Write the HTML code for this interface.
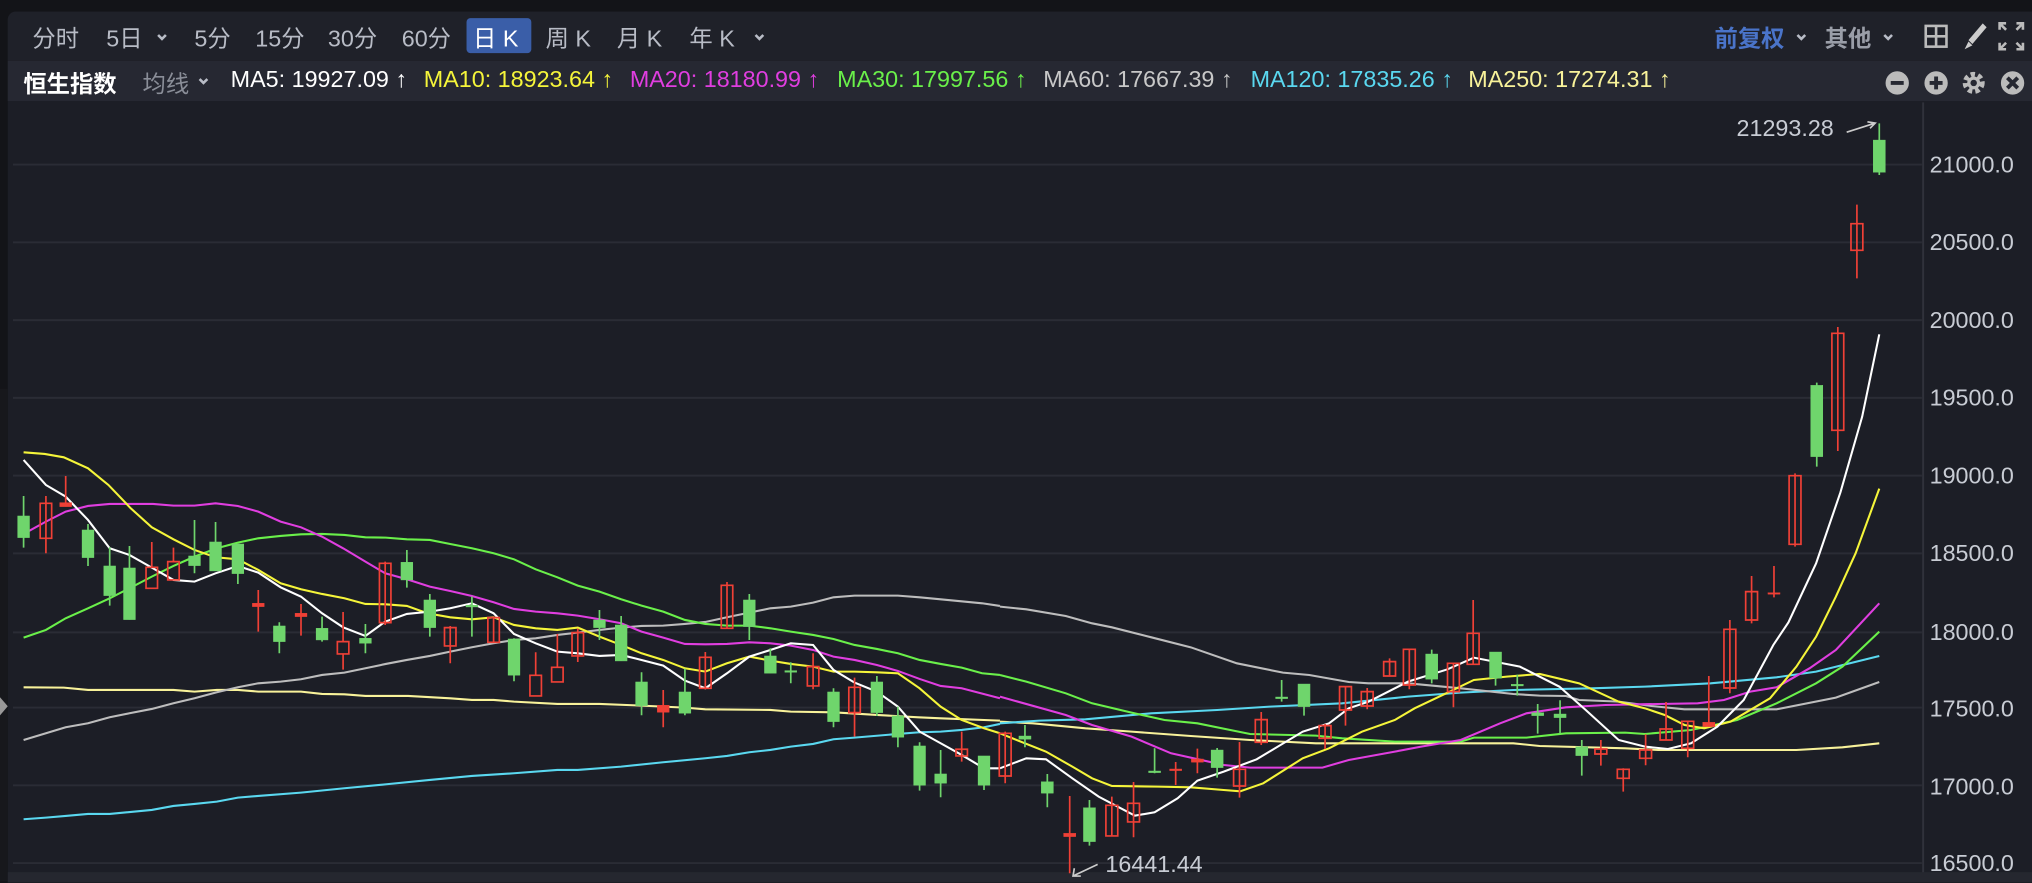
<!DOCTYPE html>
<html><head><meta charset="utf-8"><style>
html,body{margin:0;padding:0;background:#131418;width:2032px;height:882px;overflow:hidden}
#w{position:absolute;left:0;top:0;width:1568px;height:681px;transform:scale(1.29592);transform-origin:0 0;font-family:"Liberation Sans","Noto Sans CJK SC",sans-serif}
.t{position:absolute;white-space:nowrap}
</style></head><body><div id="w">
<div style="position:absolute;left:6px;top:9px;width:1562px;height:672px;background:#1c1e26;border-radius:6px 0 0 0"></div>
<div style="position:absolute;left:6px;top:9px;width:1562px;height:38px;background:#1f2129;border-radius:6px 0 0 0"></div>
<div style="position:absolute;left:6px;top:47px;width:1562px;height:31px;background:#262832"></div>
<div style="position:absolute;left:0;top:300px;width:6px;height:380px;background:#17181c"></div>
<svg style="position:absolute;left:0;top:536px" width="8" height="18"><path d="M0 2 L6 9 L0 16Z" fill="#999"/></svg>
<div style="position:absolute;left:360px;top:14px;width:50px;height:27px;background:#3a5ea8;border-radius:3px"></div>
<div class="t" style="left:25px;top:16px;font-size:18px;color:#b8bcc6">分时</div>
<div class="t" style="left:82px;top:16px;font-size:18px;color:#b8bcc6">5日</div>
<div class="t" style="left:150px;top:16px;font-size:18px;color:#b8bcc6">5分</div>
<div class="t" style="left:197px;top:16px;font-size:18px;color:#b8bcc6">15分</div>
<div class="t" style="left:253px;top:16px;font-size:18px;color:#b8bcc6">30分</div>
<div class="t" style="left:310px;top:16px;font-size:18px;color:#b8bcc6">60分</div>
<div class="t" style="left:365px;top:16px;font-size:18px;color:#fff">日 K</div>
<div class="t" style="left:421px;top:16px;font-size:18px;color:#b8bcc6">周 K</div>
<div class="t" style="left:476px;top:16px;font-size:18px;color:#b8bcc6">月 K</div>
<div class="t" style="left:532px;top:16px;font-size:18px;color:#b8bcc6">年 K</div>
<div class="t" style="left:1323px;top:16px;font-size:18px;color:#4a74c9;font-weight:bold">前复权</div>
<div class="t" style="left:1408px;top:16px;font-size:18px;color:#9a9ea8;font-weight:bold">其他</div>
<svg style="position:absolute;left:0;top:0" width="1568" height="681">
<g fill="none" stroke="#b8bcc6" stroke-width="2"><path d="M122 27l3 3 3-3M583 27l3 3 3-3M154 61l3 3 3-3"/><path d="M1387 27l3 3 3-3M1454 27l3 3 3-3"/></g>
<rect x="1486" y="20" width="16" height="16" fill="none" stroke="#bbb" stroke-width="2"/><path d="M1494 20v16M1486 28h16" stroke="#bbb" stroke-width="2"/>
<path d="M1530 18 L1519 31 L1522 34 L1533 21Z M1519 32 L1516 38 L1522 35Z" fill="#ccc"/>
<g stroke="#bbb" stroke-width="2" fill="none"><path d="M1543 23v-5h5M1543 18l5 5M1561 23v-5h-5M1561 18l-5 5M1543 33v5h5M1543 38l5-5M1561 33v5h-5M1561 38l-5-5"/></g>
<g fill="#bbb"><circle cx="1464" cy="64" r="9"/><circle cx="1494" cy="64" r="9"/><circle cx="1553" cy="64" r="9"/></g>
<path d="M1459 64h10M1489 64h10M1494 59v10M1549 60l8 8M1557 60l-8 8" stroke="#262832" stroke-width="3"/>
<circle cx="1523" cy="64" r="6" fill="none" stroke="#bbb" stroke-width="5" stroke-dasharray="3 2.2"/><circle cx="1523" cy="64" r="5" fill="#bbb"/><circle cx="1523" cy="64" r="2.5" fill="#262832"/>
<g stroke="#2a2c35" stroke-width="1.5"><path d="M10 127H1483M10 187H1483M10 247H1483M10 307H1483M10 367H1483M10 427H1483M10 488H1483M10 546H1483M10 606H1483M10 666H1483"/></g>
<path d="M1484 79V681" stroke="#30323b" stroke-width="1.5"/>
<rect x="6" y="673" width="1562" height="8" fill="#25272f"/>
<g font-size="18" fill="#c8ccd4" font-family="Liberation Sans,sans-serif">
<text x="1489" y="133">21000.0</text><text x="1489" y="193">20500.0</text><text x="1489" y="253">20000.0</text><text x="1489" y="313">19500.0</text><text x="1489" y="373">19000.0</text><text x="1489" y="433">18500.0</text><text x="1489" y="494">18000.0</text><text x="1489" y="553">17500.0</text><text x="1489" y="613">17000.0</text><text x="1489" y="672">16500.0</text>
<text x="1340" y="105">21293.28</text><text x="853" y="673">16441.44</text></g>
<path d="M1425 102 L1447 95 M1441 94 L1447 95 L1443 99" stroke="#ccc" stroke-width="1.3" fill="none"/>
<path d="M847 667 L828 676 M829 670 L828 676 L834 676" stroke="#ccc" stroke-width="1.3" fill="none"/>

<g transform="translate(0,339.5) scale(0.4921,0.2572)">
<g fill="none">
<polyline vector-effect="non-scaling-stroke" stroke="#f8f29a" stroke-width="1.6" points="37,742 100,743 138,750 272,750 305,755 340,750 373,750 405,755 472,755 505,762 540,763 573,768 640,768 706,775 740,780 774,780 806,785 874,792 940,792 1006,797 1074,803 1106,808 1208,810 1240,815 1307,817 1375,825 1440,832 1475,835 1568,842"/>
<polyline vector-effect="non-scaling-stroke" stroke="#5ad8f0" stroke-width="1.6" points="37,1138 72,1133 103,1128 138,1122 172,1122 238,1110 272,1098 305,1092 340,1085 373,1073 405,1068 472,1058 540,1045 606,1033 674,1020 740,1008 806,1000 874,990 906,990 974,980 1040,967 1106,955 1140,948 1175,937 1208,930 1240,920 1275,912 1307,898 1340,893 1408,882 1442,877 1475,875 1508,870 1543,862 1568,852"/>
<polyline vector-effect="non-scaling-stroke" stroke="#bdbdbd" stroke-width="1.6" points="37,900 72,880 103,862 138,850 172,832 203,820 238,807 272,790 305,775 340,757 373,742 405,730 440,725 472,718 505,705 540,698 573,685 605,672 638,660 674,648 706,635 740,622 774,610 806,600 840,595 874,585 906,578 940,570 974,563 1006,558 1040,557 1074,552 1106,546 1140,532 1175,518 1208,505 1240,500 1275,488 1307,472 1340,467 1408,467 1442,472 1475,478 1540,490 1568,498"/>
<polyline vector-effect="non-scaling-stroke" stroke="#6af04a" stroke-width="1.6" points="37,593 72,570 103,535 138,505 172,475 203,445 238,410 272,378 305,350 340,325 373,308 405,295 440,288 472,283 505,282 540,285 573,292 605,293 638,298 674,300 706,312 740,325 774,340 806,358 840,388 874,412 906,437 940,455 974,478 1006,497 1040,515 1074,540 1106,552 1140,557 1175,557 1208,565 1240,575 1275,585 1307,597 1340,615 1375,627 1408,640 1442,660 1475,672 1508,683 1540,700 1568,705"/>
<polyline vector-effect="non-scaling-stroke" stroke="#e03ee0" stroke-width="1.6" points="37,282 72,245 103,215 138,198 172,192 240,192 272,197 305,197 338,190 373,198 405,215 440,245 472,262 505,290 538,325 573,365 604,400 638,418 674,440 706,453 740,468 774,487 806,507 840,515 874,520 906,527 940,538 974,550 1006,575 1040,593 1074,612 1106,613 1140,612 1175,607 1208,610 1240,617 1275,630 1307,650 1340,660 1375,675 1408,693 1442,717 1475,738 1508,745 1568,775"/>
<polyline vector-effect="non-scaling-stroke" stroke="#f5f53a" stroke-width="1.6" points="37,37 70,42 100,52 138,85 170,135 205,205 238,262 272,298 305,330 338,352 373,358 405,390 440,430 472,448 505,462 540,475 573,492 605,493 638,498 670,520 706,532 740,538 774,532 806,555 840,565 874,570 906,563 940,590 974,615 1006,640 1040,660 1074,685 1106,695 1140,670 1175,650 1208,662 1240,672 1275,680 1307,695 1340,695 1375,697 1408,700 1442,745 1475,800 1508,840 1543,865 1568,880"/>
<polyline vector-effect="non-scaling-stroke" stroke="#ffffff" stroke-width="1.6" points="37,60 72,135 103,170 138,240 172,325 203,345 238,383 272,420 305,425 338,400 373,378 405,398 440,442 472,470 505,520 538,562 573,588 604,545 638,522 674,515 706,505 740,490 774,520 806,582 840,610 874,635 906,640 940,648 974,645 1006,660 1040,677 1074,722 1106,745 1140,700 1175,650 1208,630 1240,610 1275,615 1307,690 1340,728 1375,755 1408,800 1442,875 1475,910 1508,945 1543,985 1568,985"/>
</g>
<g stroke-width="1.3">
<g stroke="#6fd56c" fill="#6fd56c">
<path vector-effect="non-scaling-stroke" d="M37 168V323M138 252V378M172 322V497M203 318V539M305 240V400M338 246V393M373 312V432M438 547V640M505 530V605M573 552V640M638 330V443M674 462V590M740 470V590M806 595V724M940 510V600M974 528V663M1006 697V826M1074 686V826M1175 462V600M1208 625V700M1240 667V730M1307 745V862M1375 708V828M1408 800V922M1442 907V1052M1475 930V1072M1543 948V1050"/>
<rect x="28" y="228" width="18" height="65"/><rect x="129" y="270" width="18" height="83"/><rect x="163" y="378" width="18" height="89"/><rect x="194" y="384" width="18" height="155"/><rect x="296" y="348" width="18" height="29"/><rect x="329" y="306" width="18" height="87"/><rect x="364" y="312" width="18" height="89"/><rect x="429" y="558" width="18" height="47"/><rect x="496" y="565" width="18" height="35"/><rect x="564" y="595" width="18" height="15"/><rect x="629" y="367" width="18" height="53"/><rect x="665" y="480" width="18" height="83"/><rect x="731" y="496" width="18" height="5"/><rect x="797" y="597" width="18" height="109"/><rect x="931" y="540" width="18" height="23"/><rect x="965" y="555" width="18" height="108"/><rect x="997" y="726" width="18" height="71"/><rect x="1065" y="756" width="18" height="64"/><rect x="1166" y="480" width="18" height="80"/><rect x="1199" y="648" width="18" height="52"/><rect x="1231" y="692" width="18" height="5"/><rect x="1298" y="756" width="18" height="89"/><rect x="1366" y="726" width="18" height="92"/><rect x="1399" y="828" width="18" height="64"/><rect x="1433" y="918" width="18" height="118"/><rect x="1466" y="1002" width="18" height="28"/><rect x="1534" y="948" width="18" height="88"/>
</g>
<g stroke="#ef4036" fill="none">
<path vector-effect="non-scaling-stroke" d="M72 168V295M72 190V340M103 108V200M238 306V382M272 323V365M405 450V575M472 492V587M538 516V605M538 642V689M604 365V555M706 558V670M774 530V607M840 637V706M874 582V682M906 566V666M1040 750V862M1106 636V748M1140 426V565M1275 640V748M1340 713V890M1508 875V965"/>
<rect vector-effect="non-scaling-stroke" x="63" y="190" width="18" height="105"/><rect vector-effect="non-scaling-stroke" x="229" y="382" width="18" height="63"/><rect vector-effect="non-scaling-stroke" x="263" y="365" width="18" height="55"/><rect vector-effect="non-scaling-stroke" x="529" y="605" width="18" height="37"/><rect vector-effect="non-scaling-stroke" x="595" y="370" width="18" height="178"/><rect vector-effect="non-scaling-stroke" x="697" y="563" width="18" height="55"/><rect vector-effect="non-scaling-stroke" x="765" y="533" width="18" height="74"/><rect vector-effect="non-scaling-stroke" x="831" y="706" width="18" height="62"/><rect vector-effect="non-scaling-stroke" x="865" y="682" width="18" height="44"/><rect vector-effect="non-scaling-stroke" x="897" y="578" width="18" height="70"/><rect vector-effect="non-scaling-stroke" x="1097" y="652" width="18" height="93"/><rect vector-effect="non-scaling-stroke" x="1131" y="436" width="18" height="129"/><rect vector-effect="non-scaling-stroke" x="1266" y="680" width="18" height="58"/><rect vector-effect="non-scaling-stroke" x="1331" y="742" width="18" height="76"/><rect vector-effect="non-scaling-stroke" x="1499" y="928" width="18" height="20"/>
<g fill="#ef4036"><rect x="94" y="188" width="18" height="12"/><rect x="396" y="490" width="18" height="10"/><rect x="463" y="520" width="18" height="10"/><rect x="1031" y="796" width="18" height="21"/></g>
</g></g></g>

<g transform="translate(771.6,424.4) scale(0.5079,0.2572)">
<g fill="none">
<polyline vector-effect="non-scaling-stroke" stroke="#f8f29a" stroke-width="1.6" points="0,515 50,520 130,535 200,545 290,558 380,570 480,580 600,580 780,580 820,588 950,595 1000,600 1210,600 1280,592 1336,580"/>
<polyline vector-effect="non-scaling-stroke" stroke="#5ad8f0" stroke-width="1.6" points="0,520 60,512 130,508 230,490 330,480 410,470 520,460 620,440 700,428 780,420 900,415 980,410 1080,400 1180,382 1240,365 1336,318"/>
<polyline vector-effect="non-scaling-stroke" stroke="#bdbdbd" stroke-width="1.6" points="0,170 40,178 100,198 140,220 170,232 230,262 290,292 360,340 430,368 470,375 530,396 560,400 620,400 700,415 780,432 820,437 860,438 880,450 940,455 990,468 1040,478 1080,478 1180,478 1270,443 1336,396"/>
<polyline vector-effect="non-scaling-stroke" stroke="#6af04a" stroke-width="1.6" points="0,375 40,395 100,430 140,460 200,488 250,510 300,520 350,540 380,552 480,557 520,565 600,575 700,575 720,563 800,563 860,550 950,548 980,552 1050,540 1120,510 1180,460 1240,400 1280,350 1336,245"/>
<polyline vector-effect="non-scaling-stroke" stroke="#e03ee0" stroke-width="1.6" points="0,440 100,495 140,525 200,560 260,610 340,645 380,653 490,653 530,630 600,605 640,590 700,570 760,520 800,490 860,472 920,465 1000,462 1060,460 1100,450 1140,425 1180,412 1230,355 1270,300 1336,160"/>
<polyline vector-effect="non-scaling-stroke" stroke="#f5f53a" stroke-width="1.6" points="0,550 70,605 110,650 140,685 170,708 240,710 290,712 340,720 365,724 400,700 460,625 500,595 550,545 600,510 630,475 680,428 720,390 770,380 820,372 880,400 940,455 980,475 1010,495 1040,525 1070,535 1110,515 1170,445 1210,350 1240,260 1270,140 1300,10 1336,-184"/>
<polyline vector-effect="non-scaling-stroke" stroke="#ffffff" stroke-width="1.6" points="0,655 40,625 70,628 110,685 150,740 205,797 235,787 270,745 300,692 340,665 390,628 460,545 500,520 530,475 560,455 620,395 680,358 720,323 790,350 850,410 890,480 940,570 980,590 1015,597 1050,580 1090,530 1130,450 1175,285 1198,217 1240,40 1277,-173 1310,-400 1336,-647"/>
</g>
<g stroke="#6fd56c" fill="#6fd56c">
<path vector-effect="non-scaling-stroke" stroke-width="1.3" d="M38 525V592M72 672V772M136 750V887M235 595V670M330 594V683M428 390V455M462 402V497M656 299V400M753 306V407M786 374V437M817 462V551M851 451V551M884 570V677M1241 -502V-250M1336 -1280V-1125"/>
<rect x="29" y="558" width="18" height="10"/><rect x="63" y="695" width="18" height="35"/><rect x="127" y="773" width="18" height="102"/><rect x="226" y="663" width="18" height="5"/><rect x="321" y="600" width="18" height="53"/><rect x="419" y="441" width="18" height="5"/><rect x="453" y="402" width="18" height="68"/><rect x="647" y="312" width="18" height="76"/><rect x="744" y="306" width="18" height="79"/><rect x="777" y="403" width="18" height="5"/><rect x="808" y="488" width="18" height="9"/><rect x="842" y="492" width="18" height="11"/><rect x="875" y="590" width="18" height="27"/><rect x="1232" y="-494" width="18" height="214"/><rect x="1327" y="-1230" width="18" height="97"/>
</g>
<g stroke="#ef4036" fill="none">
<path vector-effect="non-scaling-stroke" stroke-width="1.3" d="M8 545V700M106 738V970M170 740V858M203 696V862M267 636V705M300 596V670M364 576V743M397 486V585M494 522V597M525 408V527M558 414V478M592 325V380M622 296V418M689 338V472M719 150V345M913 570V647M947 655V725M981 553V646M1012 456V570M1045 512V622M1077 378V530M1109 210V430M1142 78V220M1176 48V142M1208 -230V-10M1273 -669V-297M1302 -1036V-815"/>
<g stroke-width="1.3">
<rect vector-effect="non-scaling-stroke" x="-1" y="550" width="18" height="128"/><rect vector-effect="non-scaling-stroke" x="161" y="766" width="18" height="92"/><rect vector-effect="non-scaling-stroke" x="194" y="760" width="18" height="56"/><rect vector-effect="non-scaling-stroke" x="355" y="658" width="18" height="50"/><rect vector-effect="non-scaling-stroke" x="388" y="509" width="18" height="68"/><rect vector-effect="non-scaling-stroke" x="485" y="527" width="18" height="38"/><rect vector-effect="non-scaling-stroke" x="516" y="410" width="18" height="70"/><rect vector-effect="non-scaling-stroke" x="549" y="425" width="18" height="43"/><rect vector-effect="non-scaling-stroke" x="583" y="335" width="18" height="43"/><rect vector-effect="non-scaling-stroke" x="613" y="298" width="18" height="107"/><rect vector-effect="non-scaling-stroke" x="680" y="340" width="18" height="85"/><rect vector-effect="non-scaling-stroke" x="710" y="250" width="18" height="93"/><rect vector-effect="non-scaling-stroke" x="904" y="597" width="18" height="15"/><rect vector-effect="non-scaling-stroke" x="938" y="658" width="18" height="27"/><rect vector-effect="non-scaling-stroke" x="972" y="600" width="18" height="25"/><rect vector-effect="non-scaling-stroke" x="1003" y="537" width="18" height="33"/><rect vector-effect="non-scaling-stroke" x="1036" y="514" width="18" height="81"/><rect vector-effect="non-scaling-stroke" x="1100" y="238" width="18" height="176"/><rect vector-effect="non-scaling-stroke" x="1133" y="125" width="18" height="85"/><rect vector-effect="non-scaling-stroke" x="1199" y="-223" width="18" height="206"/><rect vector-effect="non-scaling-stroke" x="1264" y="-650" width="18" height="291"/><rect vector-effect="non-scaling-stroke" x="1293" y="-979" width="18" height="80"/>
</g>
<g fill="#ef4036"><rect x="97" y="850" width="18" height="10"/><rect x="258" y="657" width="18" height="5"/><rect x="291" y="627" width="18" height="10"/><rect x="1068" y="517" width="18" height="13"/><rect x="1167" y="128" width="18" height="5"/></g>
</g></g>
</svg>
<div class="t" style="left:18px;top:51px;font-size:18px;color:#fff;font-weight:bold">恒生指数</div>
<div class="t" style="left:110px;top:51px;font-size:18px;color:#8a8e98">均线</div>
<div class="t" style="left:178px;top:51px;font-size:18px;color:#fff">MA5: 19927.09 ↑</div>
<div class="t" style="left:327px;top:51px;font-size:18px;color:#f5f53a">MA10: 18923.64 ↑</div>
<div class="t" style="left:486px;top:51px;font-size:18px;color:#e03ee0">MA20: 18180.99 ↑</div>
<div class="t" style="left:646px;top:51px;font-size:18px;color:#6af04a">MA30: 17997.56 ↑</div>
<div class="t" style="left:805px;top:51px;font-size:18px;color:#c8c8c8">MA60: 17667.39 ↑</div>
<div class="t" style="left:965px;top:51px;font-size:18px;color:#5ad8f0">MA120: 17835.26 ↑</div>
<div class="t" style="left:1133px;top:51px;font-size:18px;color:#f8f29a">MA250: 17274.31 ↑</div>
</div></body></html>
